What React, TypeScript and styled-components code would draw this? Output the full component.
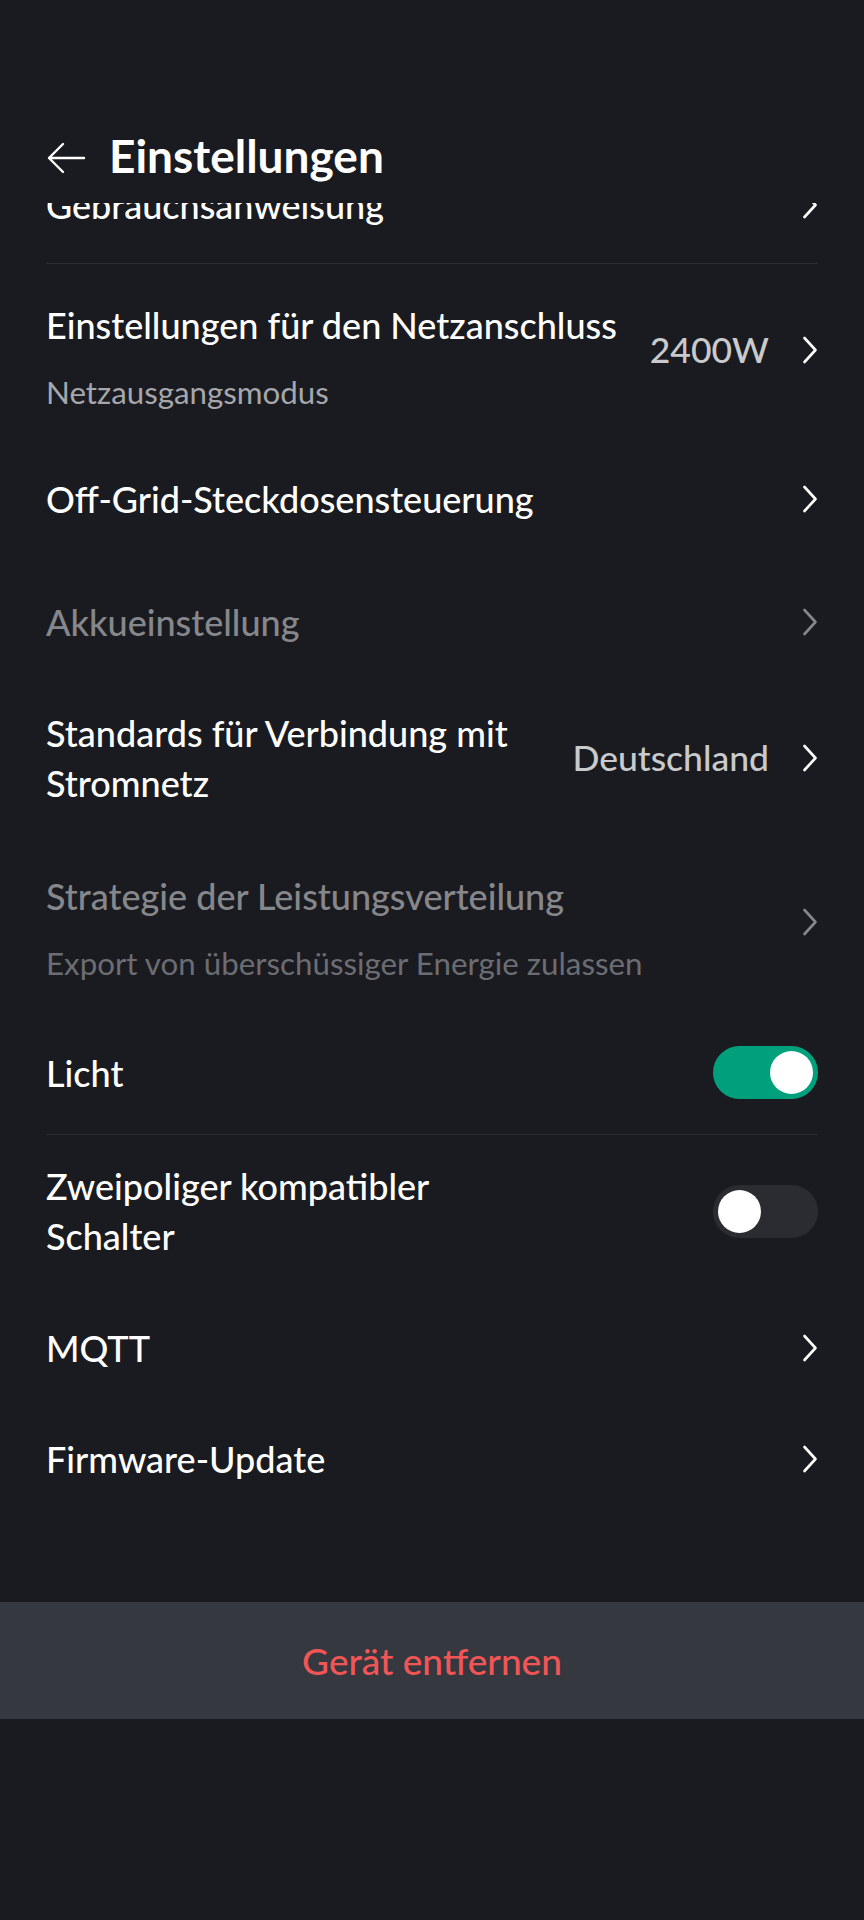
import React from 'react';
import styled, { createGlobalStyle } from 'styled-components';

const GlobalStyle = createGlobalStyle`
  html, body { margin: 0; padding: 0; background: #1a1b20; }
  body {
    font-family: Lato, "Noto Sans", sans-serif;
    color: #ffffff;
    -webkit-font-smoothing: antialiased;
  }
  * { box-sizing: border-box; }
`;

const Screen = styled.div`
  width: 864px;
  height: 1920px;
  background: #1a1b20;
  display: flex;
  flex-direction: column;
  overflow: hidden;
`;

const Header = styled.header`
  height: 203px;
  flex-shrink: 0;
  padding: 128px 46px 0;
  background: #1a1b20;
`;

const HeaderBar = styled.div`
  display: flex;
  align-items: center;
  gap: 23px;
  height: 60px;
`;

const BackButton = styled.button`
  display: flex;
  align-items: center;
  justify-content: center;
  width: 40px;
  height: 32px;
  padding: 0;
  border: 0;
  background: transparent;
  color: #ffffff;
`;

const PageTitle = styled.h1`
  margin: 0 0 4px;
  font-size: 46px;
  font-weight: 700;
  line-height: 56px;
  color: #ffffff;
`;

const ScrollArea = styled.main`
  flex: 1;
  overflow: hidden;
`;

const ScrollContent = styled.div<{ $offset: number }>`
  margin-top: ${(p) => -p.$offset}px;
  display: flex;
  flex-direction: column;
`;

const Row = styled.div<{ $pt?: number; $pb?: number }>`
  display: flex;
  align-items: center;
  gap: 24px;
  padding: ${(p) => p.$pt ?? 31}px 46px ${(p) => p.$pb ?? 31}px;
`;

const Label = styled.div`
  flex: 1;
  min-width: 0;
  display: flex;
  flex-direction: column;
`;

const Title = styled.div<{ $dim?: boolean; $maxW?: number }>`
  font-size: 36px;
  font-weight: 500;
  line-height: 50px;
  color: ${(p) => (p.$dim ? '#86878b' : '#ffffff')};
  max-width: ${(p) => (p.$maxW ? `${p.$maxW}px` : 'none')};
`;

const Sub = styled.div<{ $dim?: boolean }>`
  margin-top: 22px;
  font-size: 31.3px;
  font-weight: 400;
  line-height: 40px;
  color: ${(p) => (p.$dim ? '#6c6d72' : '#a6a7ab')};
`;

const Trail = styled.div<{ $lift?: number }>`
  display: flex;
  align-items: center;
  gap: 33px;
  flex-shrink: 0;
  padding-bottom: ${(p) => p.$lift ?? 0}px;
`;

const Value = styled.span`
  font-size: 35.5px;
  font-weight: 500;
  line-height: 50px;
  color: #c9cacc;
`;

const Divider = styled.div`
  height: 1px;
  margin: 0 46px;
  background: #2c2d33;
`;

const Switch = styled.div<{ $on: boolean }>`
  width: 105px;
  height: 53px;
  flex-shrink: 0;
  padding: 5px;
  border-radius: 27px;
  display: flex;
  justify-content: ${(p) => (p.$on ? 'flex-end' : 'flex-start')};
  align-items: center;
  background: ${(p) => (p.$on ? '#00a07c' : '#2b2c31')};
`;

const Knob = styled.span`
  width: 43px;
  height: 43px;
  border-radius: 50%;
  background: #ffffff;
`;

const DangerBar = styled.button`
  height: 117px;
  flex-shrink: 0;
  width: 100%;
  border: 0;
  background: #363840;
  font-family: Lato, "Noto Sans", sans-serif;
  font-size: 37px;
  font-weight: 500;
  color: #f25555;
`;

const BottomSpace = styled.div`
  height: 201px;
  flex-shrink: 0;
`;

const ArrowLeft = () => (
  <svg width="40" height="32" viewBox="0 0 40 32" fill="none">
    <path d="M38 16H3M17 2L3 16l14 14" stroke="currentColor" strokeWidth="2.4" strokeLinecap="round" strokeLinejoin="round" />
  </svg>
);

const Chevron = ({ color = '#ffffff' }: { color?: string }) => (
  <svg width="16" height="28" viewBox="0 0 16 28" fill="none">
    <path d="M2.5 2l11 12-11 12" stroke={color} strokeWidth="2.6" strokeLinecap="round" strokeLinejoin="round" />
  </svg>
);

export default function App() {
  return (
    <>
      <GlobalStyle />
      <Screen>
        <Header>
          <HeaderBar>
            <BackButton aria-label="Zurück">
              <ArrowLeft />
            </BackButton>
            <PageTitle>Einstellungen</PageTitle>
          </HeaderBar>
        </Header>

        <ScrollArea>
          <ScrollContent $offset={50}>
            <Row $pt={27} $pb={33}>
              <Label>
                <Title>Gebrauchsanweisung</Title>
              </Label>
              <Trail>
                <Chevron />
              </Trail>
            </Row>
            <Divider />

            <Row $pt={36} $pb={31}>
              <Label>
                <Title>Einstellungen für den Netzanschluss</Title>
                <Sub>Netzausgangsmodus</Sub>
              </Label>
              <Trail $lift={13}>
                <Value>2400W</Value>
                <Chevron />
              </Trail>
            </Row>

            <Row $pt={31} $pb={31}>
              <Label>
                <Title>Off-Grid-Steckdosensteuerung</Title>
              </Label>
              <Trail>
                <Chevron />
              </Trail>
            </Row>

            <Row $pt={42} $pb={31}>
              <Label>
                <Title $dim>Akkueinstellung</Title>
              </Label>
              <Trail>
                <Chevron color="#86878b" />
              </Trail>
            </Row>

            <Row $pt={30} $pb={31}>
              <Label>
                <Title>Standards für Verbindung mit Stromnetz</Title>
              </Label>
              <Trail>
                <Value>Deutschland</Value>
                <Chevron />
              </Trail>
            </Row>

            <Row $pt={32} $pb={31}>
              <Label>
                <Title $dim>Strategie der Leistungsverteilung</Title>
                <Sub $dim>Export von überschüssiger Energie zulassen</Sub>
              </Label>
              <Trail $lift={10}>
                <Chevron color="#86878b" />
              </Trail>
            </Row>

            <Row $pt={32} $pb={35}>
              <Label>
                <Title>Licht</Title>
              </Label>
              <Switch $on role="switch" aria-checked="true">
                <Knob />
              </Switch>
            </Row>
            <Divider />

            <Row $pt={26} $pb={31}>
              <Label>
                <Title $maxW={440}>Zweipoliger kompatibler Schalter</Title>
              </Label>
              <Switch $on={false} role="switch" aria-checked="false">
                <Knob />
              </Switch>
            </Row>

            <Row $pt={31} $pb={31}>
              <Label>
                <Title>MQTT</Title>
              </Label>
              <Trail>
                <Chevron />
              </Trail>
            </Row>

            <Row $pt={30} $pb={31}>
              <Label>
                <Title>Firmware-Update</Title>
              </Label>
              <Trail>
                <Chevron />
              </Trail>
            </Row>
          </ScrollContent>
        </ScrollArea>

        <DangerBar>Gerät entfernen</DangerBar>
        <BottomSpace />
      </Screen>
    </>
  );
}
